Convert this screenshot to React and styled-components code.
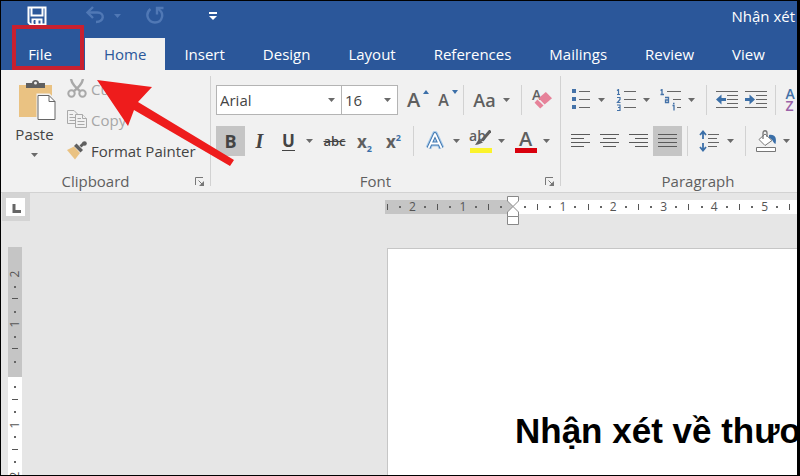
import styled, { createGlobalStyle } from "styled-components";

const GlobalStyle = createGlobalStyle`
  * {
    box-sizing: border-box;
  }
  body {
    margin: 0;
    font-family: "Open Sans", "Noto Sans", sans-serif;
    font-size: 15px;
    color: #444;
  }
  button, select {
    font: inherit;
    color: inherit;
  }
`;

const Caret = () => (
  <svg width="7" height="4" viewBox="0 0 7 4" aria-hidden="true">
    <path d="M0 0H7L3.5 4Z" fill="currentColor" />
  </svg>
);

const SaveIcon = () => (
  <svg width="20" height="20" viewBox="0 0 20 20" fill="none" stroke="#fff" strokeWidth="2">
    <path d="M1.500 1.500H18.500V18.500H3.500L1.500 16.500Z" />
    <path d="M4.500 2V9.500H15.500V2" />
    <path d="M5.500 18V13.500H14.500V18" />
    <path d="M8 14V18" stroke="#2b579a" />
    <path d="M10 14V18" strokeWidth="3" />
  </svg>
);

const UndoIcon = () => (
  <svg width="20" height="20" viewBox="0 0 20 20" fill="none" stroke="#5078b5" strokeWidth="2.4">
    <path d="M8 1L2.500 6.500L8 12" />
    <path d="M3 6.500H12.500C20 6.500 19.500 16 11 16" />
  </svg>
);

const RedoIcon = () => (
  <svg width="20" height="20" viewBox="0 0 20 20" fill="none" stroke="#5078b5" strokeWidth="2.4">
    <path d="M5.500 3C-0.500 8 3 16.500 10 16.500C17.500 16.500 20 7 13 3" />
    <path d="M12 8.500V2H18.500" />
  </svg>
);

const CustomizeIcon = () => (
  <svg width="8" height="8" viewBox="0 0 8 8" fill="#fff">
    <path d="M0 0H8V2H0ZM0 4H8L4 8Z" />
  </svg>
);

const PasteIcon = () => (
  <svg width="42" height="42" viewBox="-4 0 42 42">
    <path d="M1 6H34V38H1Z" fill="#eac282" />
    <path d="M8 9V4H14C14 0 21 0 21 4H27V9Z" fill="#5f5f5f" />
    <circle cx="17.500" cy="4" r="1.500" fill="#f1f1f1" />
    <path d="M20 16H31L37 22V40.500H20Z" fill="#fff" stroke="#f1f1f1" strokeWidth="3" />
    <path d="M20 16.500H31L37 22.500V40.500H20Z" fill="#fff" stroke="#666" />
    <path d="M31 16.500V22.500H37" fill="none" stroke="#666" />
  </svg>
);

const CutIcon = () => (
  <svg width="20" height="20" viewBox="0 0 20 20" fill="none" stroke="#a9a9a9" strokeWidth="2">
    <path d="M4 0C5 5 9 9 13.500 12.500M16 0C15 5 11 9 6.500 12.500" strokeWidth="2.400" />
    <circle cx="4.500" cy="14.500" r="3.200" />
    <circle cx="15.500" cy="14.500" r="3.200" />
  </svg>
);

const CopyIcon = () => (
  <svg width="20" height="20" viewBox="0 0 20 20" fill="#f1f1f1" stroke="#a9a9a9">
    <path d="M0.500 0.500H7L10.500 4V13.500H0.500Z" />
    <path d="M2.500 4.500H6M2.500 7.500H8M2.500 10.500H8" />
    <path d="M8.500 4.500H15.500L19.500 8.500V17.500H8.500Z" />
    <path d="M15.500 4.500V8.500H19.500M10.500 8.500H14M10.500 11.500H17.500M10.500 14.500H17.500" />
  </svg>
);

const PainterIcon = () => (
  <svg width="20" height="20" viewBox="0 0 20 20">
    <path d="M0 9L7 5.500L13 12L8 18.500Z" fill="#eac282" />
    <path d="M7 5L9.500 2.500L16 9L13.500 11.500Z" fill="#5f5f5f" />
    <path d="M12.500 4.500L16 1L18 3L14.500 6.500Z" fill="#5f5f5f" />
    <circle cx="17.500" cy="2.500" r="2.300" fill="#5f5f5f" />
  </svg>
);

const LauncherIcon = () => (
  <svg width="10" height="10" viewBox="0 0 10 10" fill="none" stroke="#777">
    <path d="M0.500 8V0.500H8" />
    <path d="M3.500 3.500L8 8" />
    <path d="M9 4V9H4Z" fill="#777" stroke="none" />
  </svg>
);

const OutlineA = () => (
  <svg width="20" height="20" viewBox="0 0 20 20" strokeLinejoin="round">
    <path d="M3.500 17L10 3L16.500 17M6 12.500H14" fill="none" stroke="#a9cbea" strokeWidth="6" />
    <path d="M3.500 17L10 3L16.500 17M6 12.500H14" fill="none" stroke="#4378b0" strokeWidth="4" />
    <path d="M3.500 17L10 3L16.500 17M6 12.500H14" fill="none" stroke="#fff" strokeWidth="1.800" />
  </svg>
);

const PenIcon = () => (
  <svg width="17" height="16" viewBox="0 0 17 16">
    <path d="M16.500 0.500L8 10.500" stroke="#5f5f5f" strokeWidth="3" />
    <path d="M5 9L9 12.500L4 14.500L1 15Z" fill="#5f5f5f" />
  </svg>
);

const EraserIcon = () => (
  <svg width="18" height="17" viewBox="0 0 16 15">
    <path d="M10.500 0L16 5.500L9.500 11L4 5.500Z" fill="#e68299" />
    <path d="M3 6.500L8.500 12L5.500 14.500L0.500 9.500Z" fill="#e68299" />
  </svg>
);

const BulletsIcon = () => (
  <svg width="18" height="22" viewBox="0 0 18 22">
    <path d="M0 0H4V4H0ZM0 8H4V12H0ZM0 16H4V20H0Z" fill="#4472a8" />
    <path d="M7 2.500H18M7 10.500H18M7 18.500H18" stroke="#666" />
  </svg>
);

const NumbersIcon = () => (
  <svg width="20" height="22" viewBox="0 0 20 22" fill="none">
    <path
      d="M1 1.500L2.500 0.500V5.500M1 5.500H4M1 8.500H4V10.500L1.500 13.500H4.500M1 16H4V18.500H2M4 18.500V21.500H1"
      stroke="#4472a8"
      strokeWidth="1.200"
    />
    <path d="M8 2.500H20M8 10.500H20M8 18.500H20" stroke="#666" />
  </svg>
);

const MultilevelIcon = () => (
  <svg width="22" height="22" viewBox="0 0 22 22" fill="none">
    <path
      d="M0.500 1.500L2 0.500V5.500M0.500 5.500H4M5 8.500H8.500V13.500H5.500V11H8M12.500 16.500H14V21.500M13 14.500H14.500"
      stroke="#4472a8"
      strokeWidth="1.300"
    />
    <path d="M7 2.500H21M13 10.500H21M17 18.500H21" stroke="#666" />
  </svg>
);

const IndentIcon = ({ increase }) => (
  <svg width="22" height="20" viewBox="0 0 22 20">
    <path d="M0 1.500H22M11 5.500H22M11 9.500H22M11 13.500H22M0 17.500H22" stroke="#666" />
    <path
      d="M0 9.500L5.500 4.500V8H10V11H5.500V14.500Z"
      fill="#3b6fa8"
      transform={increase ? "translate(10 0) scale(-1 1)" : undefined}
    />
  </svg>
);

const alignLines = {
  left: "M0 0.500H19M0 4.500H13M0 8.500H19M0 12.500H13",
  center: "M0 0.500H19M3 4.500H16M0 8.500H19M3 12.500H16",
  right: "M0 0.500H19M6 4.500H19M0 8.500H19M6 12.500H19",
  justify: "M0 0.500H19M0 4.500H19M0 8.500H19M0 12.500H19",
};

const AlignIcon = ({ kind }) => (
  <svg width="19" height="14" viewBox="0 0 19 14">
    <path d={alignLines[kind]} stroke="#5a5a5a" />
  </svg>
);

const SpacingIcon = () => (
  <svg width="20" height="22" viewBox="0 0 20 22" fill="none">
    <path d="M4 2V9M1 5L4 1.500L7 5M4 13V20M1 17L4 20.500L7 17" stroke="#3b6fa8" strokeWidth="1.800" />
    <path d="M9 4.500H20M9 8.500H18M9 12.500H20M9 16.500H18" stroke="#666" />
  </svg>
);

const ShadingIcon = () => (
  <svg width="22" height="22" viewBox="0 0 22 22" fill="none">
    <path d="M14 5C20 4 22 8 20.500 14C18 13 18 9 14 8Z" fill="#3b6fa8" />
    <path d="M10 4L17 10.500L10 15.500L4 9.500Z" fill="#fff" stroke="#777" />
    <path d="M8 9V3C8 0 12 0 12 3V7" stroke="#777" strokeWidth="1.300" />
    <path d="M1.500 17.500H20.500V21.500H1.500Z" fill="#fff" stroke="#777" />
  </svg>
);

const IndentMarker = () => (
  <svg width="12" height="29" viewBox="0 0 12 29" fill="#fff" stroke="#888">
    <path d="M0.500 0.500H11.500V5L6 10.500L0.500 5Z" />
    <path d="M6 10.500L11.500 16V20.500H0.500V16Z" />
    <path d="M0.500 20.500H11.500V28.500H0.500Z" />
  </svg>
);

const ArrowShape = () => (
  <svg width="138" height="88" viewBox="0 0 138 88">
    <path d="M0 0L55 7L41 22L137 80L133 86L37 30L31 46Z" fill="#ee1c1c" />
  </svg>
);

const tabs = ["File", "Home", "Insert", "Design", "Layout", "References", "Mailings", "Review", "View"];

const marginMarks = "|.2.|.1.|.".split("");
const textMarks = ".|.1.|.2.|.3.|.4.|.5.|".split("");
const topMarks = "2.|.1.|.".split("");
const sideMarks = ".|.1.|.2".split("");

const Marks = ({ list }) =>
  list.map((mark, i) => (
    <Mark key={i}>{mark === "|" ? <Tick /> : mark === "." ? <Dot /> : <span>{mark}</span>}</Mark>
  ));

const Tool = ({ label, children, ...rest }) => (
  <ToolButton type="button" aria-label={label} title={label} {...rest}>
    {children}
  </ToolButton>
);

const Drop = ({ label }) => (
  <DropButton type="button" aria-label={label}>
    <Caret />
  </DropButton>
);

const App = () => {
  return (
    <Window>
      <GlobalStyle />
      <TitleBar>
        <QuickAccess>
          <QuickButton aria-label="Save">
            <SaveIcon />
          </QuickButton>
          <QuickButton aria-label="Undo" disabled>
            <UndoIcon />
          </QuickButton>
          <QuickCaret aria-label="Undo history" disabled>
            <Caret />
          </QuickCaret>
          <QuickButton aria-label="Redo" disabled>
            <RedoIcon />
          </QuickButton>
          <QuickButton aria-label="Customize toolbar">
            <CustomizeIcon />
          </QuickButton>
        </QuickAccess>
        <DocName>Nhận xét</DocName>
      </TitleBar>

      <TabBar>
        {tabs.map((tab) => (
          <Tab key={tab} type="button" $file={tab === "File"} $active={tab === "Home"}>
            {tab}
          </Tab>
        ))}
      </TabBar>

      <Ribbon>
        <ClipboardGroup>
          <ClipboardTools>
            <PasteButton type="button">
              <PasteIcon />
              <span>Paste</span>
              <Caret />
            </PasteButton>
            <ClipboardList>
              <ClipboardButton type="button" disabled>
                <CutIcon />
                Cut
              </ClipboardButton>
              <ClipboardButton type="button" disabled>
                <CopyIcon />
                Copy
              </ClipboardButton>
              <ClipboardButton type="button">
                <PainterIcon />
                Format Painter
              </ClipboardButton>
            </ClipboardList>
          </ClipboardTools>
          <GroupFooter>
            <GroupLabel>Clipboard</GroupLabel>
            <Launcher aria-label="Clipboard settings">
              <LauncherIcon />
            </Launcher>
          </GroupFooter>
        </ClipboardGroup>
        <GroupLine />

        <FontGroup>
          <Rows>
            <Row>
              <FontBox>
                <select aria-label="Font" defaultValue="Arial">
                  <option>Arial</option>
                </select>
                <Caret />
              </FontBox>
              <SizeBox>
                <select aria-label="Font size" defaultValue="16">
                  <option>16</option>
                </select>
                <Caret />
              </SizeBox>
              <Tool label="Increase font size" $wide>
                <Letter $size={20}>A</Letter>
                <Raise>
                  <svg width="6" height="4" viewBox="0 0 6 4">
                    <path d="M0 4H6L3 0Z" fill="#3b6fa8" />
                  </svg>
                </Raise>
              </Tool>
              <Tool label="Decrease font size">
                <Letter $size={16}>A</Letter>
                <Raise>
                  <svg width="6" height="4" viewBox="0 0 6 4">
                    <path d="M0 0H6L3 4Z" fill="#3b6fa8" />
                  </svg>
                </Raise>
              </Tool>
              <Separator />
              <Tool label="Change case" $wide>
                <Letter $size={18}>Aa</Letter>
              </Tool>
              <Drop label="Change case options" />
              <Separator />
              <Tool label="Clear formatting">
                <EraserLetter>A</EraserLetter>
                <EraserSpot>
                  <EraserIcon />
                </EraserSpot>
              </Tool>
            </Row>
            <Row>
              <Tool label="Bold" $pressed>
                <Bold>B</Bold>
              </Tool>
              <Tool label="Italic">
                <Italic>I</Italic>
              </Tool>
              <Tool label="Underline">
                <Underline>U</Underline>
              </Tool>
              <Drop label="Underline options" />
              <Tool label="Strikethrough" $wide>
                <Strike>abc</Strike>
              </Tool>
              <Tool label="Subscript">
                <Script>
                  x<sub>2</sub>
                </Script>
              </Tool>
              <Tool label="Superscript">
                <Script>
                  x<sup>2</sup>
                </Script>
              </Tool>
              <Separator />
              <Tool label="Text effects" $wide>
                <OutlineA />
              </Tool>
              <Drop label="Text effects options" />
              <Tool label="Highlight">
                <Swatch $color="#fbf32c">
                  <Strong>ab</Strong>
                </Swatch>
                <PenSpot>
                  <PenIcon />
                </PenSpot>
              </Tool>
              <Drop label="Highlight colors" />
              <Tool label="Font color">
                <Swatch $color="#d9000d">
                  <Letter $size={20}>A</Letter>
                </Swatch>
              </Tool>
              <Drop label="Font colors" />
            </Row>
          </Rows>
          <GroupFooter>
            <GroupLabel>Font</GroupLabel>
            <Launcher aria-label="Font settings">
              <LauncherIcon />
            </Launcher>
          </GroupFooter>
        </FontGroup>
        <GroupLine />

        <ParagraphGroup>
          <Rows>
            <Row>
              <Tool label="Bullets">
                <BulletsIcon />
              </Tool>
              <Drop label="Bullet styles" />
              <Tool label="Numbering">
                <NumbersIcon />
              </Tool>
              <Drop label="Number styles" />
              <Tool label="Multilevel list">
                <MultilevelIcon />
              </Tool>
              <Drop label="List styles" />
              <Separator />
              <Tool label="Decrease indent">
                <IndentIcon />
              </Tool>
              <Tool label="Increase indent">
                <IndentIcon increase />
              </Tool>
              <Separator />
              <Tool label="Sort">
                <Sort>
                  <span>A</span>
                  <span>Z</span>
                </Sort>
              </Tool>
            </Row>
            <Row>
              <Tool label="Align left">
                <AlignIcon kind="left" />
              </Tool>
              <Tool label="Center">
                <AlignIcon kind="center" />
              </Tool>
              <Tool label="Align right">
                <AlignIcon kind="right" />
              </Tool>
              <Tool label="Justify" $pressed>
                <AlignIcon kind="justify" />
              </Tool>
              <Separator />
              <Tool label="Line spacing" $wide>
                <SpacingIcon />
              </Tool>
              <Drop label="Line spacing options" />
              <Separator />
              <Tool label="Shading">
                <ShadingIcon />
              </Tool>
              <Drop label="Shading colors" />
            </Row>
          </Rows>
          <GroupFooter>
            <GroupLabel>Paragraph</GroupLabel>
          </GroupFooter>
        </ParagraphGroup>
      </Ribbon>

      <Workspace>
        <RulerRow>
          <Corner type="button" aria-label="Tab stop">
            <svg width="19" height="18" viewBox="0 0 19 18">
              <path d="M0 0H19V18H0Z" fill="#fff" />
              <path d="M8 6V13.500H15" fill="none" stroke="#666" strokeWidth="3" />
            </svg>
          </Corner>
          <Ruler>
            <MarginStrip>
              <Marks list={marginMarks} />
            </MarginStrip>
            <TextStrip>
              <Marks list={textMarks} />
              <MarkerSpot>
                <IndentMarker />
              </MarkerSpot>
            </TextStrip>
          </Ruler>
        </RulerRow>
        <Canvas>
          <SideRuler>
            <SideMargin>
              <Marks list={topMarks} />
            </SideMargin>
            <SideText>
              <Marks list={sideMarks} />
            </SideText>
          </SideRuler>
          <Page>
            <Heading>Nhận xét về thươ</Heading>
          </Page>
        </Canvas>
      </Workspace>

      <FileFrame />
      <Pointer>
        <ArrowShape />
      </Pointer>
    </Window>
  );
};

const Window = styled.div`
  position: relative;
  display: flex;
  flex-direction: column;
  min-height: 100vh;
  overflow: hidden;
  border: 1px solid #000;
  border-right-width: 3px;
  background-color: #e6e6e6;
`;

const TitleBar = styled.header`
  display: flex;
  align-items: center;
  justify-content: space-between;
  padding: 0 2px 8px 26px;
  background-color: #2b579a;
  color: #fff;
`;

const QuickAccess = styled.div`
  display: flex;
  align-items: center;
  height: 29px;

  button {
    display: flex;
    align-items: center;
    justify-content: center;
    padding: 0;
    border: none;
    background: none;
  }
`;

const QuickButton = styled.button.attrs({ type: "button" })`
  width: 20px;
  margin-right: 38px;
`;

const QuickCaret = styled(QuickButton)`
  width: 8px;
  margin: 0 24px 0 -30px;
  color: #5078b5;
`;

const DocName = styled.span`
  white-space: nowrap;
  line-height: 20px;
`;

const TabBar = styled.nav`
  display: flex;
  background-color: #2b579a;
`;

const Tab = styled.button`
  flex: none;
  width: ${(props) => (props.$file ? "84px" : "auto")};
  height: 32px;
  padding: ${(props) => (props.$file ? "0 6px 0 0" : "0 19px")};
  border: none;
  background-color: ${(props) => (props.$active ? "#f1f1f1" : "transparent")};
  color: ${(props) => (props.$active ? "#2b579a" : "#fff")};
  line-height: 32px;
`;

const Ribbon = styled.div`
  display: flex;
  overflow: hidden;
  background-color: #f1f1f1;
  border-bottom: 1px solid #d2d2d2;
`;

const Group = styled.section`
  display: flex;
  flex: none;
  flex-direction: column;
  justify-content: space-between;
  height: 122px;
`;

const ClipboardGroup = styled(Group)`
  width: 209px;
`;

const FontGroup = styled(Group)`
  width: 349px;
`;

const ParagraphGroup = styled(Group)`
  width: 274px;
`;

const GroupLine = styled.div`
  flex: none;
  width: 1px;
  margin: 6px 0;
  background-color: #d2d2d2;
`;

const GroupFooter = styled.div`
  position: relative;
  height: 22px;
`;

const GroupLabel = styled.div`
  padding-right: 20px;
  text-align: center;
  line-height: 22px;
  color: #5f5f5f;

  &:last-child {
    padding: 0;
  }
`;

const Launcher = styled.button.attrs({ type: "button" })`
  position: absolute;
  right: 5px;
  top: 7px;
  display: flex;
  padding: 0;
  border: none;
  background: none;
`;

const ClipboardTools = styled.div`
  display: flex;
  padding-left: 4px;
`;

const PasteButton = styled.button`
  display: flex;
  flex-direction: column;
  align-items: center;
  width: 59px;
  padding: 9px 0 0;
  border: none;
  background: none;
  line-height: 20px;

  span {
    margin: 3px 0 9px;
  }

  svg:last-child {
    color: #6a6a6a;
  }
`;

const ClipboardList = styled.div`
  display: flex;
  flex-direction: column;
  padding: 3px 0 0 3px;
`;

const ClipboardButton = styled.button`
  display: flex;
  align-items: center;
  gap: 4px;
  height: 31px;
  padding: 0;
  border: none;
  background: none;
  white-space: nowrap;

  &:disabled {
    color: #a6a6a6;
  }
`;

const Rows = styled.div`
  display: flex;
  flex-direction: column;
  gap: 11px;
  padding: 15px 0 0 5px;
`;

const Row = styled.div`
  display: flex;
  height: 30px;
`;

const ToolButton = styled.button`
  position: relative;
  display: flex;
  flex: 0 0 ${(props) => (props.$wide ? "31px" : "29px")};
  align-items: center;
  justify-content: center;
  padding: 0;
  border: none;
  background-color: ${(props) => (props.$pressed ? "#c5c5c5" : "transparent")};
`;

const DropButton = styled.button`
  display: flex;
  flex: 0 0 16px;
  align-items: center;
  padding: 0 0 0 3px;
  border: none;
  background: none;
  color: #6a6a6a;
`;

const Separator = styled.div`
  flex: none;
  width: 1px;
  margin: 0 5px;
  background-color: #d2d2d2;
`;

const Combo = styled.label`
  display: flex;
  flex: none;
  align-items: center;
  padding-right: 6px;
  border: 1px solid #b4b4b4;
  background-color: #fff;
  color: #6a6a6a;

  select {
    flex: 1;
    min-width: 0;
    padding: 0 0 0 3px;
    border: none;
    appearance: none;
    background: none;
    color: #444;
    line-height: 28px;
  }
`;

const FontBox = styled(Combo)`
  width: 126px;
`;

const SizeBox = styled(Combo)`
  width: 57px;
  margin-left: -1px;
`;

const Letter = styled.span`
  font-size: ${(props) => props.$size}px;
  line-height: 20px;
  font-weight: 600;
  color: #5f5f5f;
`;

const Raise = styled.span`
  position: absolute;
  right: 0;
  top: 5px;
  display: flex;
`;

const EraserLetter = styled(Letter)`
  position: absolute;
  left: 5px;
  top: 0;
  font-size: 14px;
`;

const EraserSpot = styled.span`
  position: absolute;
  left: 7px;
  top: 7px;
  display: flex;
`;

const Bold = styled.strong`
  font-size: 18px;
`;

const Italic = styled.em`
  font-family: "Liberation Serif", serif;
  font-size: 20px;
  font-weight: 700;
`;

const Underline = styled.span`
  font-weight: 700;
  font-size: 17px;
  line-height: 18px;
  border-bottom: 1px solid #444;
`;

const Strike = styled.s`
  font-size: 13px;
  font-weight: 600;
`;

const Script = styled.span`
  font-size: 17px;
  font-weight: 700;
  color: #5f5f5f;

  sub,
  sup {
    font-size: 9px;
    line-height: 0;
    color: #3b6fa8;
  }
`;

const Swatch = styled.span`
  display: flex;
  justify-content: center;
  width: 22px;
  height: 24px;
  border-bottom: 5px solid ${(props) => props.$color};
`;

const Strong = styled(Letter).attrs({ $size: 14 })`
  font-weight: 600;
  line-height: 14px;
  margin-right: 6px;
`;

const PenSpot = styled.span`
  position: absolute;
  left: 8px;
  top: 4px;
  display: flex;
`;

const Sort = styled.span`
  display: flex;
  flex-direction: column;
  width: 20px;
  text-align: left;
  font-size: 14px;
  font-weight: 600;
  line-height: 12px;
  color: #4472a8;

  span + span {
    color: #9a62a8;
  }
`;

const Workspace = styled.main`
  display: flex;
  flex: 1;
  flex-direction: column;
  font-size: 12px;
`;

const RulerRow = styled.div`
  display: flex;
  align-items: flex-start;
  gap: 355px;
  padding-left: 1px;
`;

const Corner = styled.button`
  display: flex;
  flex: none;
  padding: 5px 5px 5px 4px;
  border: none;
  background-color: #d4d4d4;
`;

const Ruler = styled.div`
  display: flex;
  flex: 1;
  height: 14px;
  margin-top: 7px;
`;

const Strip = styled.div`
  position: relative;
  display: flex;
  align-items: center;
  justify-content: space-between;
`;

const MarginStrip = styled(Strip)`
  width: 128px;
  padding: 0 12px 0 2px;
  background-color: #c5c5c5;
`;

const TextStrip = styled(Strip)`
  flex: 1;
  padding: 0 7px 0 12px;
  background-color: #fff;
`;

const Mark = styled.span`
  display: flex;
  align-items: center;
  justify-content: center;
  width: 0;
  height: 14px;
  line-height: 14px;
  color: #555;
`;

const Tick = styled.i`
  flex: none;
  width: 1px;
  height: 6px;
  background-color: #555;
`;

const Dot = styled.i`
  flex: none;
  width: 2px;
  height: 2px;
  background-color: #666;
`;

const MarkerSpot = styled.span`
  position: absolute;
  left: -6px;
  top: -4px;
  display: flex;
`;

const Canvas = styled.div`
  display: flex;
  flex: 1;
  padding-left: 7px;
`;

const SideRuler = styled.div`
  display: flex;
  flex: none;
  flex-direction: column;
  width: 14px;
  margin-top: 26px;

  ${Mark} {
    width: 14px;
    height: 0;
    transform: rotate(-90deg);
  }
`;

const SideMargin = styled(Strip)`
  flex-direction: column;
  height: 130px;
  padding: 27px 0 15px;
  background-color: #c5c5c5;
`;

const SideText = styled(Strip)`
  flex: 1;
  flex-direction: column;
  padding-top: 10px;
  background-color: #fff;
`;

const Page = styled.article`
  flex: 1;
  min-width: 0;
  overflow: hidden;
  margin: 27px 0 0 365px;
  padding: 162px 0 0 127px;
  border: 1px solid #c6c6c6;
  border-width: 1px 0 0 1px;
  background-color: #fff;
`;

const Heading = styled.h1`
  margin: 0;
  font-family: "Liberation Sans", Arial, sans-serif;
  font-size: 35px;
  line-height: 40px;
  color: #000;
  white-space: nowrap;
`;

const FileFrame = styled.div`
  position: absolute;
  left: 11px;
  top: 24px;
  width: 72px;
  height: 45px;
  border: 4px solid #c8202f;
  pointer-events: none;
`;

const Pointer = styled.div`
  position: absolute;
  left: 96px;
  top: 79px;
  display: flex;
  pointer-events: none;
`;

export default App;
